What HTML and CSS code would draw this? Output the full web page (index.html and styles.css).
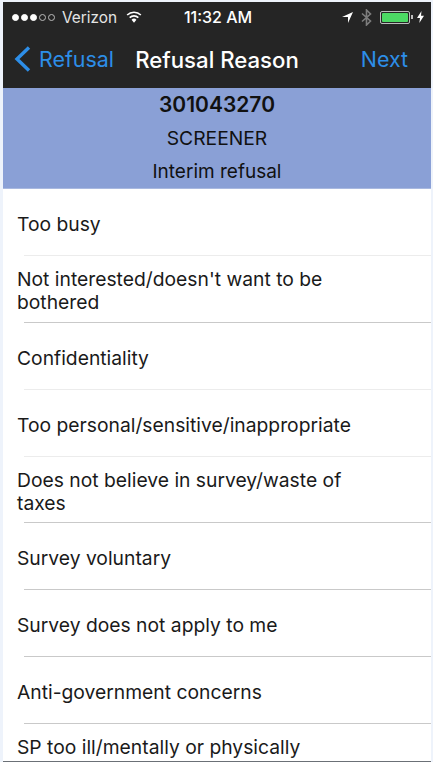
FILE: index.html
```html
<!DOCTYPE html>
<html lang="en">
<head>
<meta charset="utf-8">
<title>Refusal Reason</title>
<link rel="stylesheet" href="styles.css">
</head>
<body>
<div class="phone">
  <header class="topbar">
    <div class="status">
      <div class="status-left">
        <span class="dots"><i class="dot on"></i><i class="dot on"></i><i class="dot on"></i><i class="dot"></i><i class="dot"></i></span>
        <span class="carrier">Verizon</span>
        <svg class="wifi" width="16" height="12" viewBox="0 0 17 12"><path d="M8.500 12 5.900 8.900a3.800 3.800 0 0 1 5.200 0Z" fill="#fff"/><path d="M3.900 6.700a6.600 6.600 0 0 1 9.200 0M1.200 3.900a10.600 10.600 0 0 1 14.600 0" fill="none" stroke="#fff" stroke-width="1.700"/></svg>
      </div>
      <div class="clock">11:32 AM</div>
      <div class="status-right">
        <svg class="loc" width="11" height="11" viewBox="0 0 11 11"><path d="M11 0 6 11V5H0Z" fill="#fff"/></svg>
        <svg class="bt" width="11" height="17" viewBox="0 0 11 17"><path d="M1 4.500 9.500 12 5.500 16V1L9.500 5 1 12.500" fill="none" stroke="#7d7d7d" stroke-width="1.600"/></svg>
        <span class="battery"><span class="level"></span></span>
        <span class="nub"></span>
        <svg class="bolt" width="7" height="12" viewBox="0 0 7 12"><path d="M4.500 0 0 7h3L2.300 12 7 4.800H4Z" fill="#fff"/></svg>
      </div>
    </div>
    <nav class="navbar">
      <div class="back">
        <svg width="19" height="28" viewBox="0 0 19 28"><path d="M16 2.500 4 14l12 11.500" fill="none" stroke="#2d8ee8" stroke-width="3.400"/></svg>
        <span>Refusal</span>
      </div>
      <h1 class="title">Refusal Reason</h1>
      <div class="next">Next</div>
    </nav>
  </header>
  <section class="case">
    <div class="case-id">301043270</div>
    <div class="case-line code">SCREENER</div>
    <div class="case-line">Interim refusal</div>
  </section>
  <ul class="reasons">
    <li class="faint">Too busy</li>
    <li>Not interested/doesn't want to be bothered</li>
    <li class="faint">Confidentiality</li>
    <li class="faint">Too personal/sensitive/inappropriate</li>
    <li>Does not believe in survey/waste of taxes</li>
    <li>Survey voluntary</li>
    <li>Survey does not apply to me</li>
    <li>Anti-government concerns</li>
    <li class="last">SP too ill/mentally or physically</li>
  </ul>
</div>
</body>
</html>
```
FILE: styles.css
```css
* { box-sizing: border-box; }
html, body { margin: 0; height: 100%; }
body {
  background: #eef3fb;
  font-family: "Inter", "Liberation Sans", sans-serif;
  overflow: hidden;
}
.phone {
  width: 428px;
  height: 760px;
  margin: 2px 0 0 3px;
  background: #fff;
  border-bottom: 1px solid #6b7076;
  overflow: hidden;
}
.topbar { background: #252525; height: 86px; color: #fff; }
.status {
  height: 30px;
  padding: 0 7px 0 9px;
  display: grid;
  grid-template-columns: 1fr auto 1fr;
  align-items: center;
}
.status-left { display: flex; align-items: center; }
.dots { display: flex; gap: 2px; margin-right: 7px; }
.dot { width: 7px; height: 7px; border-radius: 50%; border: 1px solid #bbb; }
.dot.on { background: #fff; border-color: #fff; }
.carrier { font-size: 15.400px; color: #e4e4e4; }
.wifi { margin-left: 9px; }
.clock { font-size: 16px; font-weight: 500; }
.status-right { display: flex; align-items: center; justify-content: flex-end; }
.loc { margin-right: 8px; }
.bt { margin-right: 8px; }
.battery {
  width: 30px; height: 13px;
  border: 1px solid #bdbdbd; border-radius: 2px;
  padding: 1px; display: flex;
}
.level { flex: 1; background: #4cd964; border-radius: 1px; }
.nub { width: 2px; height: 4px; background: #bdbdbd; margin: 0 4px 0 1px; }
.navbar {
  height: 54px;
  position: relative;
  display: flex;
  align-items: center;
  justify-content: space-between;
  padding: 0 23px 0 10px;
  font-size: 21.400px;
  color: #2d8ee8;
}
.back { display: flex; align-items: center; gap: 7px; }
.title {
  position: absolute; left: 0; right: 0; margin: 0;
  text-align: center;
  font-size: 22.200px; font-weight: 500; color: #fff;
}
.case {
  background: #8aa0d6;
  height: 101px;
  color: #111;
  text-align: center;
  border-bottom: 1px solid #a9b9e0;
}
.case-id { font-size: 21px; font-weight: 600; line-height: 33.500px; }
.case-line { font-size: 19px; line-height: 33.500px; }
.case-line.code { font-size: 19.300px; }
.reasons { list-style: none; margin: 0; padding: 0; }
.reasons li {
  height: 66.900px;
  margin-left: 14px;
  padding: 4px 70px 0 0;
  display: flex;
  align-items: center;
  font-size: 19.300px;
  line-height: 23px;
  color: #1a1a1a;
  position: relative;
}
.reasons li::after {
  content: "";
  position: absolute;
  left: 7px; right: 0; bottom: 0;
  height: 1px;
  background: #c9c9c9;
}
.reasons li.faint::after { background: #ececec; }
.reasons li.last { align-items: flex-start; padding-top: 12px; height: 37px; }
.reasons li.last::after { display: none; }
```
